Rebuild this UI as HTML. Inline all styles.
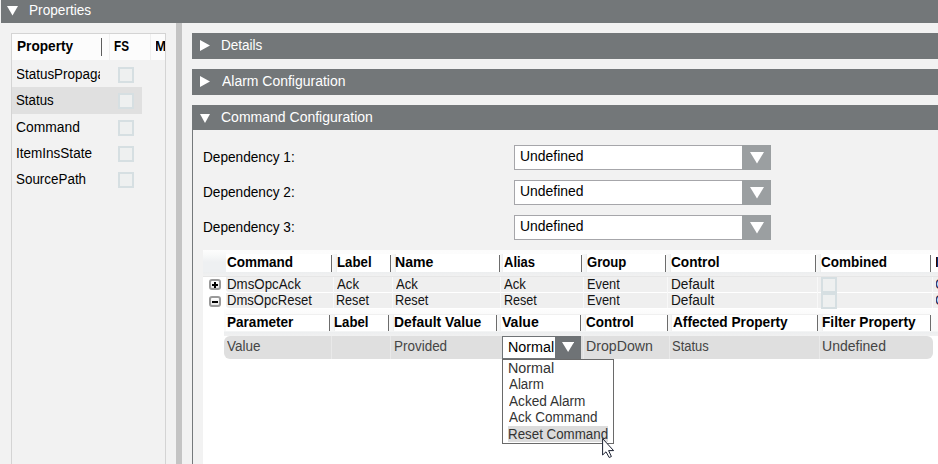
<!DOCTYPE html>
<html><head><meta charset="utf-8"><style>
html,body{margin:0;padding:0}
body{width:938px;height:464px;overflow:hidden;position:relative;background:#f2f2f2;font-family:"Liberation Sans",sans-serif}
body>div,body>span,body>svg,div>span{position:absolute}
.t{white-space:nowrap;line-height:16px;transform-origin:0 0}
</style></head><body>
<div style="left:1px;top:0px;width:937px;height:23px;background:#737779"></div>
<svg style="left:7px;top:6px" width="11" height="9.5" viewBox="0 0 11 9.5"><polygon points="0,0 11,0 5.5,9.5" fill="#fff"/></svg>
<div style="left:11px;top:33px;width:155px;height:440px;border:1px solid #d4d4d4;background:#f2f2f2;box-sizing:border-box"></div>
<div style="left:12px;top:34px;width:153px;height:26px;background:#fcfcfc"></div>
<div style="left:109px;top:34px;width:1px;height:26px;background:#efefef"></div>
<div style="left:150px;top:34px;width:1px;height:26px;background:#efefef"></div>
<div style="left:101px;top:38px;width:1px;height:18px;background:#5e5e5e"></div>
<div style="left:12px;top:87px;width:130px;height:27px;background:#e0e0e0"></div>
<div style="left:118px;top:67px;width:16px;height:16px;border:2px solid #d6dfe2;background:#eef0f0;box-sizing:border-box"></div>
<div style="left:118px;top:93px;width:16px;height:16px;border:2px solid #d6dfe2;background:#eef0f0;box-sizing:border-box"></div>
<div style="left:118px;top:120px;width:16px;height:16px;border:2px solid #d6dfe2;background:#eef0f0;box-sizing:border-box"></div>
<div style="left:118px;top:146px;width:16px;height:16px;border:2px solid #d6dfe2;background:#eef0f0;box-sizing:border-box"></div>
<div style="left:118px;top:172px;width:16px;height:16px;border:2px solid #d6dfe2;background:#eef0f0;box-sizing:border-box"></div>
<div style="left:176px;top:23px;width:6px;height:441px;background:#c4c4c4"></div>
<div style="left:192px;top:33px;width:746px;height:26px;background:#737779"></div>
<svg style="left:200px;top:40.3px" width="10" height="11" viewBox="0 0 10 11"><polygon points="0,0 10,5.5 0,11" fill="#fff"/></svg>
<div style="left:192px;top:69px;width:746px;height:26px;background:#737779"></div>
<svg style="left:200px;top:76.3px" width="10" height="11" viewBox="0 0 10 11"><polygon points="0,0 10,5.5 0,11" fill="#fff"/></svg>
<div style="left:192px;top:105px;width:746px;height:25px;background:#737779"></div>
<svg style="left:200px;top:113.5px" width="10" height="9" viewBox="0 0 10 9"><polygon points="0,0 10,0 5.0,9" fill="#fff"/></svg>
<div style="left:192px;top:130px;width:1px;height:334px;background:#75797b"></div>
<div style="left:514px;top:145px;width:257px;height:25px;border:1px solid #a6a6aa;background:#fff;box-sizing:border-box"></div>
<div style="left:742px;top:145px;width:29px;height:25px;background:#9b9fa1"></div>
<svg style="left:749.7px;top:152px" width="14" height="11.5" viewBox="0 0 14 11.5"><polygon points="0,0 14,0 7.0,11.5" fill="#fff"/></svg>
<div style="left:514px;top:180px;width:257px;height:25px;border:1px solid #a6a6aa;background:#fff;box-sizing:border-box"></div>
<div style="left:742px;top:180px;width:29px;height:25px;background:#9b9fa1"></div>
<svg style="left:749.7px;top:187px" width="14" height="11.5" viewBox="0 0 14 11.5"><polygon points="0,0 14,0 7.0,11.5" fill="#fff"/></svg>
<div style="left:514px;top:215px;width:257px;height:25px;border:1px solid #a6a6aa;background:#fff;box-sizing:border-box"></div>
<div style="left:742px;top:215px;width:29px;height:25px;background:#9b9fa1"></div>
<svg style="left:749.7px;top:222px" width="14" height="11.5" viewBox="0 0 14 11.5"><polygon points="0,0 14,0 7.0,11.5" fill="#fff"/></svg>
<div style="left:203px;top:250px;width:735px;height:214px;background:#fff"></div>
<div style="left:203px;top:250px;width:735px;height:27px;background:linear-gradient(#fcfcfc 0,#fdfdfd 21px,#eceeef 22px,#f1f1f1 26px,#e6e6e6 26px)"></div>
<div style="left:203px;top:250px;width:23px;height:22px;background:linear-gradient(#fdfdfd 0,#f8f9f9 5px,#eef0f2 12px,#eef0f2 22px)"></div>
<div style="left:226px;top:254px;width:712px;height:18px;background:#fff"></div>
<div style="left:331px;top:255px;width:1px;height:17px;background:#6c6c6c"></div>
<div style="left:390px;top:255px;width:1px;height:17px;background:#6c6c6c"></div>
<div style="left:499px;top:255px;width:1px;height:17px;background:#6c6c6c"></div>
<div style="left:581px;top:255px;width:1px;height:17px;background:#6c6c6c"></div>
<div style="left:665px;top:255px;width:1px;height:17px;background:#6c6c6c"></div>
<div style="left:815px;top:255px;width:1px;height:17px;background:#6c6c6c"></div>
<div style="left:930px;top:255px;width:1px;height:17px;background:#6c6c6c"></div>
<div style="left:332px;top:254px;width:4.5px;height:18px;background:linear-gradient(90deg,#f9f9f9,#f4f5f5 70%,#ececec)"></div>
<div style="left:391px;top:254px;width:4.800000000000011px;height:18px;background:linear-gradient(90deg,#f9f9f9,#f4f5f5 70%,#ececec)"></div>
<div style="left:500px;top:254px;width:3.3000000000000114px;height:18px;background:linear-gradient(90deg,#f9f9f9,#f4f5f5 70%,#ececec)"></div>
<div style="left:582px;top:254px;width:4.600000000000023px;height:18px;background:linear-gradient(90deg,#f9f9f9,#f4f5f5 70%,#ececec)"></div>
<div style="left:666px;top:254px;width:4.5px;height:18px;background:linear-gradient(90deg,#f9f9f9,#f4f5f5 70%,#ececec)"></div>
<div style="left:816px;top:254px;width:4.600000000000023px;height:18px;background:linear-gradient(90deg,#f9f9f9,#f4f5f5 70%,#ececec)"></div>
<div style="left:226px;top:277px;width:712px;height:15px;background:#efefef;border-radius:0 0 0 3px"></div>
<div style="left:226px;top:293px;width:712px;height:15px;background:#efefef;border-radius:0 0 0 3px"></div>
<div style="left:333px;top:277px;width:1px;height:31px;background:#f8f8f8"></div>
<div style="left:392px;top:277px;width:1px;height:31px;background:#f8f8f8"></div>
<div style="left:500px;top:277px;width:1px;height:31px;background:#f8f8f8"></div>
<div style="left:583px;top:277px;width:1px;height:31px;background:#f8f8f8"></div>
<div style="left:667px;top:277px;width:1px;height:31px;background:#f8f8f8"></div>
<div style="left:817px;top:277px;width:1px;height:31px;background:#f8f8f8"></div>
<div style="left:932px;top:277px;width:1px;height:31px;background:#f8f8f8"></div>
<div style="left:821px;top:277px;width:16px;height:16px;border:2px solid #d6dfe2;background:#eef0f0;box-sizing:border-box"></div>
<div style="left:821px;top:293px;width:16px;height:16px;border:2px solid #d6dfe2;background:#eef0f0;box-sizing:border-box"></div>
<div style="left:209px;top:279px;width:12px;height:11px;border:2px solid #9a9a9a;border-radius:3px;background:linear-gradient(#fff,#e8e8e8);box-sizing:border-box"></div>
<div style="left:212px;top:283.5px;width:6px;height:2px;background:#000"></div>
<div style="left:214px;top:281.5px;width:2px;height:6px;background:#000"></div>
<div style="left:209px;top:296px;width:12px;height:11px;border:2px solid #9a9a9a;border-radius:3px;background:linear-gradient(#fff,#e8e8e8);box-sizing:border-box"></div>
<div style="left:212px;top:300.5px;width:6px;height:2px;background:#000"></div>
<div style="left:224px;top:309px;width:714px;height:27px;background:linear-gradient(#fdfdfd 0,#fbfbfb 5px,#fafafa 22px,#eceeef 23px,#f1f1f1 27px)"></div>
<div style="left:226px;top:314px;width:704px;height:17px;background:#fff"></div>
<div style="left:329px;top:315px;width:1px;height:16px;background:#6c6c6c"></div>
<div style="left:388px;top:315px;width:1px;height:16px;background:#6c6c6c"></div>
<div style="left:496px;top:315px;width:1px;height:16px;background:#6c6c6c"></div>
<div style="left:580px;top:315px;width:1px;height:16px;background:#6c6c6c"></div>
<div style="left:667px;top:315px;width:1px;height:16px;background:#6c6c6c"></div>
<div style="left:817px;top:315px;width:1px;height:16px;background:#6c6c6c"></div>
<div style="left:930px;top:315px;width:1px;height:16px;background:#6c6c6c"></div>
<div style="left:330px;top:314px;width:4.699999999999989px;height:17px;background:linear-gradient(90deg,#f9f9f9,#f4f5f5 70%,#ececec)"></div>
<div style="left:389px;top:314px;width:5.199999999999989px;height:17px;background:linear-gradient(90deg,#f9f9f9,#f4f5f5 70%,#ececec)"></div>
<div style="left:497px;top:314px;width:4.199999999999989px;height:17px;background:linear-gradient(90deg,#f9f9f9,#f4f5f5 70%,#ececec)"></div>
<div style="left:581px;top:314px;width:4.5px;height:17px;background:linear-gradient(90deg,#f9f9f9,#f4f5f5 70%,#ececec)"></div>
<div style="left:668px;top:314px;width:4.399999999999977px;height:17px;background:linear-gradient(90deg,#f9f9f9,#f4f5f5 70%,#ececec)"></div>
<div style="left:818px;top:314px;width:4.600000000000023px;height:17px;background:linear-gradient(90deg,#f9f9f9,#f4f5f5 70%,#ececec)"></div>
<div style="left:226px;top:314px;width:704px;height:1px;background:#f0f0f0"></div>
<div style="left:224px;top:336px;width:709px;height:23px;background:#dfdfdf;border-radius:6px"></div>
<div style="left:331px;top:336px;width:1px;height:23px;background:#e9e9e9"></div>
<div style="left:390px;top:336px;width:1px;height:23px;background:#e9e9e9"></div>
<div style="left:583px;top:336px;width:1px;height:23px;background:#e9e9e9"></div>
<div style="left:669px;top:336px;width:1px;height:23px;background:#e9e9e9"></div>
<div style="left:819px;top:336px;width:1px;height:23px;background:#e9e9e9"></div>
<div style="left:502px;top:336px;width:79px;height:23px;background:#6f7376"></div>
<div style="left:503px;top:337px;width:52px;height:21px;background:#fff"></div>
<svg style="left:561.8px;top:342px" width="12.2" height="10" viewBox="0 0 12.2 10"><polygon points="0,0 12.2,0 6.1,10" fill="#fff"/></svg>
<div style="left:502px;top:358.6px;width:112px;height:85.4px;border:1px solid #6a6a6a;background:#fff;box-sizing:border-box"></div>
<div style="left:508px;top:426px;width:100px;height:16px;background:#dcdcdc"></div>
<span class="t" style="left:28.73px;top:2px;font-size:14px;font-weight:400;color:#ffffff;transform:scaleX(0.9740)">Properties</span>
<span class="t" style="left:16.53px;top:38px;font-size:14px;font-weight:700;color:#000;transform:scaleX(0.9737)">Property</span>
<span class="t" style="left:113.96px;top:38px;font-size:14px;font-weight:700;color:#000;transform:scaleX(0.8353)">FS</span>
<div style="left:156px;top:38px;width:9px;height:16px;overflow:hidden"><span class="t" style="left:-0.96px;top:0;font-size:14px;font-weight:700;color:#000;transform:scaleX(0.9600)">M</span></div>
<div style="left:17px;top:66px;width:83px;height:16px;overflow:hidden"><span class="t" style="left:-0.96px;top:0;font-size:14px;font-weight:400;color:#000;transform:scaleX(0.9600)">StatusPropaga</span></div>
<span class="t" style="left:16.05px;top:92px;font-size:14px;font-weight:400;color:#000;transform:scaleX(0.9487)">Status</span>
<span class="t" style="left:16.01px;top:119px;font-size:14px;font-weight:400;color:#000;transform:scaleX(0.9889)">Command</span>
<span class="t" style="left:16.03px;top:145px;font-size:14px;font-weight:400;color:#000;transform:scaleX(0.9662)">ItemInsState</span>
<span class="t" style="left:16.04px;top:171px;font-size:14px;font-weight:400;color:#000;transform:scaleX(0.9577)">SourcePath</span>
<span class="t" style="left:221.23px;top:37px;font-size:14px;font-weight:400;color:#ffffff;transform:scaleX(0.9667)">Details</span>
<span class="t" style="left:222.20px;top:73px;font-size:14px;font-weight:400;color:#ffffff;transform:scaleX(0.9976)">Alarm Configuration</span>
<span class="t" style="left:221.20px;top:109px;font-size:14px;font-weight:400;color:#ffffff;transform:scaleX(1.0007)">Command Configuration</span>
<span class="t" style="left:202.73px;top:149px;font-size:14px;font-weight:400;color:#000;transform:scaleX(0.9739)">Dependency 1:</span>
<span class="t" style="left:519.80px;top:148px;font-size:14px;font-weight:400;color:#000;transform:scaleX(0.9952)">Undefined</span>
<span class="t" style="left:202.73px;top:184px;font-size:14px;font-weight:400;color:#000;transform:scaleX(0.9739)">Dependency 2:</span>
<span class="t" style="left:519.80px;top:183px;font-size:14px;font-weight:400;color:#000;transform:scaleX(0.9952)">Undefined</span>
<span class="t" style="left:202.73px;top:219px;font-size:14px;font-weight:400;color:#000;transform:scaleX(0.9739)">Dependency 3:</span>
<span class="t" style="left:519.80px;top:218px;font-size:14px;font-weight:400;color:#000;transform:scaleX(0.9952)">Undefined</span>
<span class="t" style="left:227.20px;top:254px;font-size:14px;font-weight:700;color:#000;transform:scaleX(0.9662)">Command</span>
<span class="t" style="left:336.75px;top:254px;font-size:14px;font-weight:700;color:#000;transform:scaleX(0.9457)">Label</span>
<span class="t" style="left:395.49px;top:254px;font-size:14px;font-weight:700;color:#000;transform:scaleX(1.0081)">Name</span>
<span class="t" style="left:504.00px;top:254px;font-size:14px;font-weight:700;color:#000;transform:scaleX(0.9273)">Alias</span>
<span class="t" style="left:587.30px;top:254px;font-size:14px;font-weight:700;color:#000;transform:scaleX(0.9381)">Group</span>
<span class="t" style="left:671.20px;top:254px;font-size:14px;font-weight:700;color:#000;transform:scaleX(0.9755)">Control</span>
<span class="t" style="left:821.30px;top:254px;font-size:14px;font-weight:700;color:#000;transform:scaleX(0.9632)">Combined</span>
<div style="left:936px;top:254px;width:2px;height:16px;overflow:hidden"><span class="t" style="left:-0.96px;top:0;font-size:14px;font-weight:700;color:#000;transform:scaleX(0.9600)">I</span></div>
<span class="t" style="left:226.75px;top:276px;font-size:14px;font-weight:400;color:#141414;transform:scaleX(0.9494)">DmsOpcAck</span>
<span class="t" style="left:337.20px;top:276px;font-size:14px;font-weight:400;color:#141414;transform:scaleX(0.9435)">Ack</span>
<span class="t" style="left:396.20px;top:276px;font-size:14px;font-weight:400;color:#141414;transform:scaleX(0.9391)">Ack</span>
<span class="t" style="left:504.20px;top:276px;font-size:14px;font-weight:400;color:#141414;transform:scaleX(0.9391)">Ack</span>
<span class="t" style="left:586.69px;top:276px;font-size:14px;font-weight:400;color:#141414;transform:scaleX(0.9143)">Event</span>
<span class="t" style="left:670.62px;top:276px;font-size:14px;font-weight:400;color:#141414;transform:scaleX(0.9750)">Default</span>
<div style="left:936px;top:276px;width:2px;height:16px;overflow:hidden"><span class="t" style="left:-0.96px;top:0;font-size:14px;font-weight:400;color:#1a2a5a;transform:scaleX(0.9600)">C</span></div>
<span class="t" style="left:226.77px;top:292px;font-size:14px;font-weight:400;color:#141414;transform:scaleX(0.9322)">DmsOpcReset</span>
<span class="t" style="left:336.30px;top:292px;font-size:14px;font-weight:400;color:#141414;transform:scaleX(0.9000)">Reset</span>
<span class="t" style="left:395.29px;top:292px;font-size:14px;font-weight:400;color:#141414;transform:scaleX(0.9111)">Reset</span>
<span class="t" style="left:503.60px;top:292px;font-size:14px;font-weight:400;color:#141414;transform:scaleX(0.8972)">Reset</span>
<span class="t" style="left:586.69px;top:292px;font-size:14px;font-weight:400;color:#141414;transform:scaleX(0.9143)">Event</span>
<span class="t" style="left:670.62px;top:292px;font-size:14px;font-weight:400;color:#141414;transform:scaleX(0.9750)">Default</span>
<div style="left:936px;top:292px;width:2px;height:16px;overflow:hidden"><span class="t" style="left:-0.96px;top:0;font-size:14px;font-weight:400;color:#1a2a5a;transform:scaleX(0.9600)">C</span></div>
<span class="t" style="left:226.73px;top:314px;font-size:14px;font-weight:700;color:#000;transform:scaleX(0.9691)">Parameter</span>
<span class="t" style="left:334.46px;top:314px;font-size:14px;font-weight:700;color:#000;transform:scaleX(0.9429)">Label</span>
<span class="t" style="left:393.91px;top:314px;font-size:14px;font-weight:700;color:#000;transform:scaleX(0.9931)">Default Value</span>
<span class="t" style="left:501.90px;top:314px;font-size:14px;font-weight:700;color:#000;transform:scaleX(1.0056)">Value</span>
<span class="t" style="left:586.20px;top:314px;font-size:14px;font-weight:700;color:#000;transform:scaleX(0.9612)">Control</span>
<span class="t" style="left:673.10px;top:314px;font-size:14px;font-weight:700;color:#000;transform:scaleX(0.9763)">Affected Property</span>
<span class="t" style="left:822.32px;top:314px;font-size:14px;font-weight:700;color:#000;transform:scaleX(0.9779)">Filter Property</span>
<span class="t" style="left:227.20px;top:338px;font-size:14px;font-weight:400;color:#454545;transform:scaleX(0.9647)">Value</span>
<span class="t" style="left:393.94px;top:338px;font-size:14px;font-weight:400;color:#454545;transform:scaleX(0.9611)">Provided</span>
<span class="t" style="left:585.69px;top:338px;font-size:14px;font-weight:400;color:#454545;transform:scaleX(1.0109)">DropDown</span>
<span class="t" style="left:672.17px;top:338px;font-size:14px;font-weight:400;color:#454545;transform:scaleX(0.9282)">Status</span>
<span class="t" style="left:822.30px;top:338px;font-size:14px;font-weight:400;color:#454545;transform:scaleX(1.0016)">Undefined</span>
<span class="t" style="left:507.78px;top:339px;font-size:14px;font-weight:400;color:#000;transform:scaleX(1.0233)">Normal</span>
<span class="t" style="left:507.98px;top:360px;font-size:14px;font-weight:400;color:#333;transform:scaleX(1.0233)">Normal</span>
<span class="t" style="left:509.00px;top:376px;font-size:14px;font-weight:400;color:#333;transform:scaleX(0.9528)">Alarm</span>
<span class="t" style="left:508.80px;top:393px;font-size:14px;font-weight:400;color:#333;transform:scaleX(0.9731)">Acked Alarm</span>
<span class="t" style="left:508.80px;top:409px;font-size:14px;font-weight:400;color:#333;transform:scaleX(0.9626)">Ack Command</span>
<span class="t" style="left:508.35px;top:426px;font-size:14px;font-weight:400;color:#333;transform:scaleX(0.9524)">Reset Command</span>
<svg style="left:602px;top:438px" width="14" height="22" viewBox="0 0 14 22"><path d="M0.6,0.6 L0.6,17 L4,13.8 L7.2,19.5 L9.4,18.5 L6.6,12.6 L11.6,12.6 Z" fill="#fff" stroke="#1a1f30" stroke-width="1" stroke-linejoin="round"/></svg>
</body></html>
